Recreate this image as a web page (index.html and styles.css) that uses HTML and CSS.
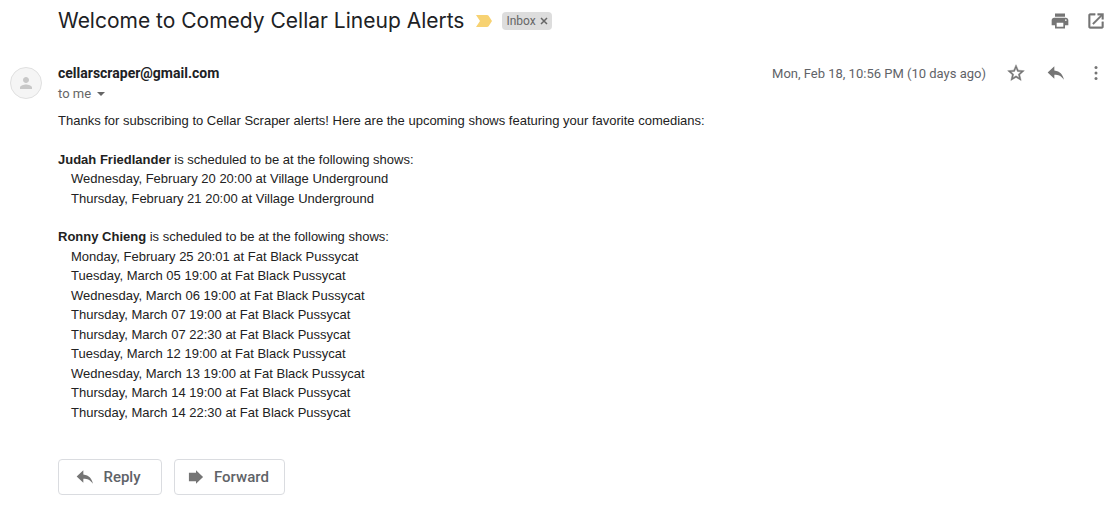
FILE: index.html
```html
<!DOCTYPE html>
<html lang="en">
<head>
<meta charset="utf-8">
<meta name="viewport" content="width=device-width, initial-scale=1">
<title>Welcome to Comedy Cellar Lineup Alerts</title>
<link rel="stylesheet" href="styles.css">
</head>
<body>
<main class="thread">
  <header class="subject-bar">
    <h1 class="subject">Welcome to Comedy Cellar Lineup Alerts</h1>
    <svg class="importance" viewBox="0 0 16 12" role="img" aria-label="Important"><path d="M0 0h11q1 0 1.600.8L16 6l-3.400 5.200Q12 12 11 12H0l4-6z"/></svg>
    <span class="label">Inbox <button class="label-remove" type="button" aria-label="Remove label Inbox"><svg viewBox="0 0 8 8"><path d="M1 1l6 6M7 1L1 7"/></svg></button></span>
    <div class="actions">
      <button class="icon-button" type="button" aria-label="Print"><svg viewBox="0 0 24 24"><path d="M19 8H5c-1.660 0-3 1.340-3 3v6h4v4h12v-4h4v-6c0-1.660-1.340-3-3-3zm-3 11H8v-5h8v5zm3-7c-.55 0-1-.45-1-1s.45-1 1-1 1 .45 1 1-.45 1-1 1zm-1-9H6v4h12V3z"/></svg></button>
      <button class="icon-button" type="button" aria-label="Open in new window"><svg viewBox="0 0 24 24"><path d="M19 19H5V5h6V3H5c-1.110 0-2 .9-2 2v14c0 1.100.89 2 2 2h14c1.100 0 2-.9 2-2v-6h-2v6zM14 3v2h3.590l-9.830 9.830 1.410 1.410L19 6.410V10h2V3h-7z" stroke="currentColor" stroke-width=".5"/></svg></button>
    </div>
  </header>

  <article class="message">
    <div class="avatar"><svg viewBox="0 0 24 24"><path d="M12 12c2.210 0 4-1.790 4-4s-1.790-4-4-4-4 1.790-4 4 1.790 4 4 4zm0 2c-2.670 0-8 1.340-8 4v2h16v-2c0-2.660-5.330-4-8-4z"/></svg></div>
    <div class="content">
      <header class="message-header">
        <div class="sender">
          <strong class="sender-name">cellarscraper@gmail.com</strong>
          <button class="recipient" type="button">to me <svg viewBox="0 0 8 4"><path d="M0 0h8L4 4z"/></svg></button>
        </div>
        <time class="date">Mon, Feb 18, 10:56 PM (10 days ago)</time>
        <div class="actions">
          <button class="icon-button" type="button" aria-label="Star"><svg viewBox="0 0 24 24"><path d="M22 9.240l-7.190-.62L12 2 9.190 8.630 2 9.240l5.460 4.730L5.820 21 12 17.270 18.180 21l-1.630-7.030L22 9.240zM12 15.400l-3.760 2.270 1-4.280-3.320-2.880 4.380-.38L12 6.100l1.710 4.040 4.380.38-3.320 2.880 1 4.280L12 15.400z" stroke="currentColor" stroke-width=".5"/></svg></button>
          <button class="icon-button" type="button" aria-label="Reply"><svg viewBox="0 0 24 24"><path d="M10 9V4l-8 7.500 8 7.500v-4.800c5 0 8.500 1.600 11.500 6-1-6-4.500-10.200-11.500-11.200z"/></svg></button>
          <button class="icon-button" type="button" aria-label="More"><svg viewBox="0 0 24 24"><circle cx="12" cy="5.500" r="1.800"/><circle cx="12" cy="12" r="1.800"/><circle cx="12" cy="18.500" r="1.800"/></svg></button>
        </div>
      </header>

      <div class="body">
        <p>Thanks for subscribing to Cellar Scraper alerts! Here are the upcoming shows featuring your favorite comedians:</p>
        <section>
          <p><b>Judah Friedlander</b> is scheduled to be at the following shows:</p>
          <ul class="shows">
            <li>Wednesday, February 20 20:00 at Village Underground</li>
            <li>Thursday, February 21 20:00 at Village Underground</li>
          </ul>
        </section>
        <section>
          <p><b>Ronny Chieng</b> is scheduled to be at the following shows:</p>
          <ul class="shows">
            <li>Monday, February 25 20:01 at Fat Black Pussycat</li>
            <li>Tuesday, March 05 19:00 at Fat Black Pussycat</li>
            <li>Wednesday, March 06 19:00 at Fat Black Pussycat</li>
            <li>Thursday, March 07 19:00 at Fat Black Pussycat</li>
            <li>Thursday, March 07 22:30 at Fat Black Pussycat</li>
            <li>Tuesday, March 12 19:00 at Fat Black Pussycat</li>
            <li>Wednesday, March 13 19:00 at Fat Black Pussycat</li>
            <li>Thursday, March 14 19:00 at Fat Black Pussycat</li>
            <li>Thursday, March 14 22:30 at Fat Black Pussycat</li>
          </ul>
        </section>
      </div>

      <footer class="replies">
        <button class="reply-button" type="button"><svg viewBox="0 0 24 24"><path d="M10 9V4l-8 7.500 8 7.500v-4.800c5 0 8.500 1.600 11.500 6-1-6-4.500-10.200-11.500-11.200z"/></svg>Reply</button>
        <button class="reply-button" type="button"><svg viewBox="0 0 24 24"><path d="M3.500 7H12V4l8.500 8-8.500 8v-3H3.500z"/></svg>Forward</button>
      </footer>
    </div>
  </article>
</main>
</body>
</html>
```
FILE: styles.css
```css
* {
  box-sizing: border-box;
}

body {
  margin: 0;
  background: #fff;
  color: #202124;
  font-family: Roboto, sans-serif;
}

p, ul, h1 {
  margin: 0;
  padding: 0;
}

button {
  border: 0;
  padding: 0;
  background: none;
  color: inherit;
  font: inherit;
  cursor: pointer;
}

svg {
  display: block;
  fill: currentColor;
}

.thread {
  padding: 4px 14px 32px 10px;
}

.subject-bar {
  display: flex;
  align-items: center;
  min-height: 34px;
  padding-left: 48px;
}

.subject {
  font-family: Inter, sans-serif;
  font-size: 21px;
  font-weight: 400;
  line-height: 32px;
}

.importance {
  flex: none;
  width: 16px;
  height: 12px;
  margin: 0 10px 0 12px;
  color: #f7d272;
}

.label {
  display: flex;
  align-items: center;
  gap: 4px;
  height: 18px;
  padding: 0 4px;
  border-radius: 4px;
  background: #ddd;
  color: #666;
  font-size: 12px;
}

.label-remove svg {
  width: 8px;
  height: 8px;
  fill: none;
  stroke: currentColor;
  stroke-width: 1.5;
}

.actions {
  display: flex;
  gap: 16px;
  margin-left: auto;
  color: #757575;
}

.icon-button svg {
  width: 20px;
  height: 20px;
}

.message {
  display: flex;
  gap: 16px;
  padding-top: 25px;
}

.avatar {
  display: grid;
  flex: none;
  place-items: center;
  width: 32px;
  height: 32px;
  margin-top: 4px;
  border: 1px solid #e0e0e0;
  border-radius: 50%;
  background: #f5f5f5;
  color: #c8c8c8;
}

.avatar svg {
  width: 18px;
  height: 18px;
}

.content {
  flex: 1;
  min-width: 0;
}

.message-header {
  display: flex;
  align-items: flex-start;
}

.message-header .actions {
  gap: 20px;
  margin-left: 20px;
}

.sender {
  flex: 1;
}

.sender-name {
  display: block;
  font-size: 14px;
  line-height: 20px;
}

.recipient {
  display: flex;
  align-items: center;
  gap: 6px;
  color: #666;
  font-size: 13px;
  line-height: 22px;
}

.recipient svg {
  width: 8px;
  height: 4px;
}

.date {
  color: #5f6368;
  font-size: 13px;
  line-height: 22px;
}

.body {
  display: grid;
  gap: 19px;
  padding-top: 6px;
  color: #222;
  font-family: "Liberation Sans", Arial, sans-serif;
  font-size: 13px;
  line-height: 1.5;
}

.shows {
  padding-left: 13px;
  list-style: none;
}

.replies {
  display: flex;
  gap: 12px;
  padding-top: 37px;
}

.reply-button {
  display: flex;
  align-items: center;
  justify-content: center;
  gap: 8px;
  min-width: 104px;
  height: 36px;
  padding: 0 15px 0 11px;
  border: 1px solid #dadce0;
  border-radius: 4px;
  color: #5f6368;
  font-size: 15px;
  font-weight: 500;
}

.reply-button svg {
  width: 20px;
  height: 20px;
  color: #757575;
}
```
